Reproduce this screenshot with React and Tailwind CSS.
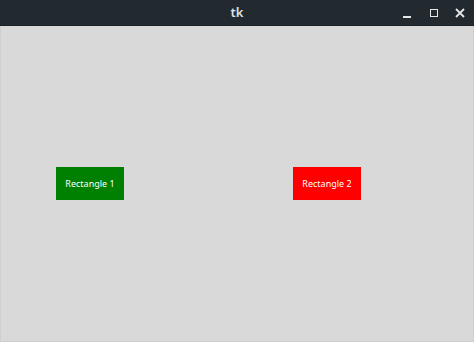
export default function App() {
  return (
    <div className="flex h-[342px] w-[474px] flex-col bg-[#d9d9d9] font-['Noto_Sans',sans-serif]">
      <div className="relative flex h-[26px] shrink-0 items-center justify-center bg-[#232a2f] border-b border-[#1b2024]">
        <span className="text-[13px] font-semibold text-[#dfe2e4]">tk</span>
        <div className="absolute right-0 top-0 flex h-full items-center">
          <div className="flex w-[27px] justify-center">
            <div className="mt-[8px] h-[2px] w-[8px] bg-[#e4e6e7]" />
          </div>
          <div className="flex w-[27px] justify-center">
            <div className="h-[8px] w-[8px] border-[1.5px] border-[#e4e6e7]" />
          </div>
          <div className="flex w-[27px] justify-center pr-[2px]">
            <svg width="10" height="10" viewBox="0 0 10 10">
              <path d="M1 1 L9 9 M9 1 L1 9" stroke="#e4e6e7" strokeWidth="1.8" />
            </svg>
          </div>
        </div>
      </div>
      <div className="relative flex-1 border-x border-b border-[#cfcfcf]">
        <div className="absolute left-[55px] top-[141px] flex h-[33px] w-[68px] items-center justify-center bg-[#008000] text-[9px] text-white">
          Rectangle 1
        </div>
        <div className="absolute left-[292px] top-[141px] flex h-[33px] w-[68px] items-center justify-center bg-[#ff0000] text-[9px] text-white">
          Rectangle 2
        </div>
      </div>
    </div>
  );
}
